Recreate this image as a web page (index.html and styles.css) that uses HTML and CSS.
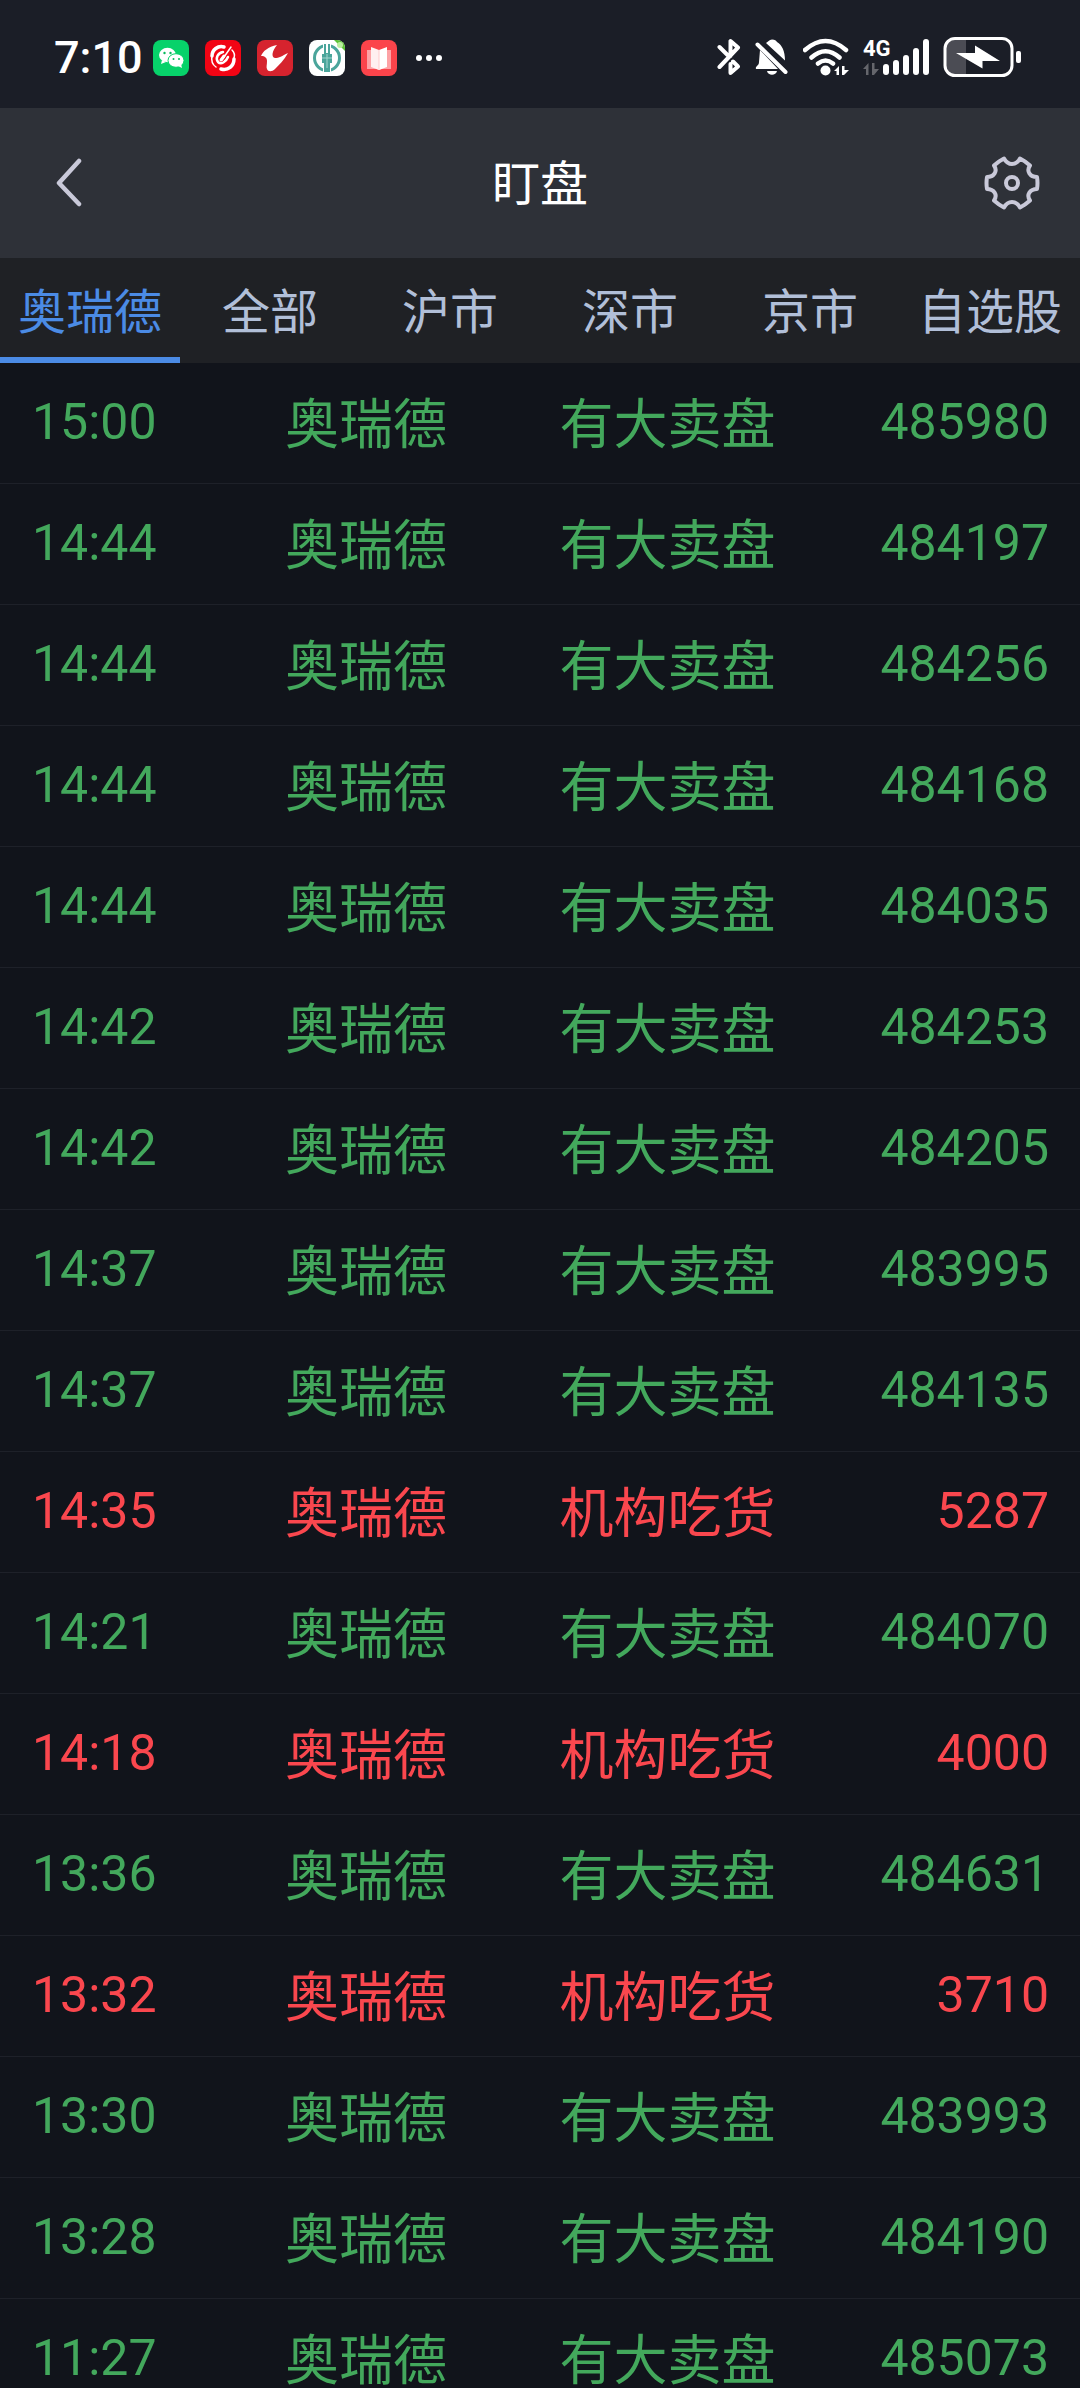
FILE: index.html
```
<!DOCTYPE html>
<html lang="zh-CN">
<head>
    <meta charset="UTF-8">
    <meta name="viewport" content="width=device-width, initial-scale=1.0">
    <title>盯盘</title>
    <link rel="stylesheet" href="styles.css">
</head>
<body>
    <div class="status-bar">
        <span class="clock">7:10</span>
        <div class="app-icons">
            <!-- chat -->
            <svg width="36" height="36" viewBox="0 0 36 36">
                <rect width="36" height="36" rx="8" fill="#07d26a"/>
                <ellipse cx="14.500" cy="15" rx="8.500" ry="7.200" fill="#fff"/>
                <path d="M9 20l-1 4 5-2z" fill="#fff"/>
                <ellipse cx="23" cy="20.500" rx="8" ry="6.800" fill="#fff" stroke="#07d26a"/>
                <path d="M25 26l4 2-1-4z" fill="#fff"/>
                <g fill="#07b95d">
                    <circle cx="11.500" cy="13" r="1.200"/><circle cx="17.500" cy="13" r="1.200"/>
                    <circle cx="20.500" cy="19" r="1"/><circle cx="26" cy="19" r="1"/>
                </g>
            </svg>
            <!-- red swirl -->
            <svg width="36" height="36" viewBox="0 0 36 36">
                <rect width="36" height="36" rx="8" fill="#f20414"/>
                <g fill="none" stroke="#fff" stroke-linecap="round">
                    <path d="M19 7C13 5 7 10 7 16" stroke-width="3.500"/>
                    <path d="M7 16c-1 5 1 9 4 11" stroke-width="1.500"/>
                    <path d="M16 29c7 2 13-3 13-10" stroke-width="3.500"/>
                    <path d="M29 18c1-3 0-6-2-8" stroke-width="1.500"/>
                    <path d="M18 12c-5 1-8 6-5 10 3 3 8 0 10-5" stroke-width="2.500"/>
                    <path d="M26 7L17 20" stroke-width="1.500"/>
                    <path d="M19 16l-3 4" stroke-width="3"/>
                </g>
            </svg>
            <!-- red bird -->
            <svg width="36" height="36" viewBox="0 0 36 36">
                <rect width="36" height="36" rx="8" fill="#d6232e"/>
                <path d="M20 5C11 7 6 11 4 16c4 0 6 2 6 5 0 4-1 6 0 8 1 3 5 3 8 0 4-4 9-9 13-16-6 3-9 5-13 5-4-1-3-7 2-13z" fill="#fff"/>
            </svg>
            <!-- bank -->
            <svg width="36" height="36" viewBox="0 0 36 36">
                <rect width="36" height="36" rx="8" fill="#fff"/>
                <path d="M25 0h3a8 8 0 0 1 8 8v3z" fill="#5bc236"/>
                <circle cx="31" cy="5" r="3" fill="#b9ee9d"/>
                <circle cx="18" cy="18" r="12.500" fill="none" stroke="#4aa59b" stroke-width="3"/>
                <path d="M14 4h8v28h-8z" fill="#fff"/>
                <path d="M15 4h2v9h2V4h2v10h2v9h-2v9h-6v-9h-2v-9h2z" fill="#4aa59b"/>
                <path d="M18 14v14M13 18h10" stroke="#a3d6d0"/>
            </svg>
            <!-- reader -->
            <svg width="36" height="36" viewBox="0 0 36 36">
                <rect width="36" height="36" rx="8" fill="#fb444b"/>
                <path d="M6 10h24v19H20l-2 1-2-1H6z" fill="#fda2a5"/>
                <path d="M10 7l8 3v20l-8-3z" fill="#fff0f0"/>
                <path d="M26 7l-8 3v20l8-3z" fill="#fff"/>
                <path d="M18 10v20" stroke="#fcc"/>
            </svg>
        </div>
        <svg class="more-dots" width="28" height="8" viewBox="0 0 28 8" fill="#fff">
            <circle cx="4" cy="4" r="3"/><circle cx="14" cy="4" r="3"/><circle cx="24" cy="4" r="3"/>
        </svg>
        <div class="system-icons">
            <!-- bluetooth -->
            <svg width="24" height="44" viewBox="0 0 24 44" fill="none" stroke="#fff" stroke-width="4" stroke-linecap="round" stroke-linejoin="round">
                <path d="M2.500 31L21 11.500 13.500 5v15M2.500 11l9 9M13.500 28v9l7.500-6.500-5-5"/>
            </svg>
            <!-- muted bell -->
            <svg width="34" height="44" viewBox="0 0 34 44" fill="#fff">
                <path d="M11 7c2-1 3-3 6-3.500 3 0 4 1 5 2.500 5 3 8 9 8 18.500z"/>
                <path d="M5 14l18 19H1c-1-3 3-3 3-7zM12 35h10c-1 5-9 5-10 0z"/>
                <path d="M2.500 8.500L30.500 36" stroke="#fff" stroke-width="4" stroke-linecap="round"/>
            </svg>
            <!-- wifi -->
            <svg width="46" height="44" viewBox="0 0 46 44" fill="none" stroke="#fff" stroke-width="4.500" stroke-linecap="round">
                <path d="M2 14Q22.500-4 43 14M8.500 21.500Q22.500 9 36.500 21.500M15 27.500q7.500-6 15 0"/>
                <circle cx="22.500" cy="34.500" r="5" fill="#fff" stroke="none"/>
                <path d="M31 35l5-5v9h-2.500v-4zM39 30h2.500v4H46l-5 5h-2z" fill="#fff" stroke="none"/>
            </svg>
            <!-- mobile signal -->
            <svg width="66" height="44" viewBox="0 0 66 44" fill="#fff">
                <text class="network-type" x="0" y="20">4G</text>
                <path d="M0 33l5.500-6v12H3v-6zM9 27h2.500v6H16l-5 6H9z" fill="#65666c"/>
                <rect x="20" y="28" width="6" height="11" rx="3"/>
                <rect x="30" y="24" width="6" height="15" rx="3"/>
                <rect x="40" y="19" width="6" height="20" rx="3"/>
                <rect x="50" y="12" width="6" height="27" rx="3"/>
                <rect x="60" y="3" width="6" height="36" rx="3"/>
            </svg>
            <!-- battery, charging -->
            <svg width="78" height="44" viewBox="0 0 78 44" fill="#fff">
                <path d="M23 3H12a9 9 0 0 0-9 9v18a9 9 0 0 0 9 9h11z" fill="#4b4c54"/>
                <rect x="2" y="2.500" width="67" height="37" rx="10" fill="none" stroke="#fff" stroke-width="3"/>
                <rect x="73" y="15" width="5" height="12" rx="2"/>
                <path d="M13 17h19V9.500L57 25H39.500v7.500z"/>
            </svg>
        </div>
    </div>

    <header class="header">
        <button class="icon-button" aria-label="返回">
            <svg width="28" height="56" viewBox="0 0 28 56" fill="none" stroke="#c9c9d9" stroke-width="4.500" stroke-linecap="round" stroke-linejoin="round">
                <path d="M25 6L5 28 25 49"/>
            </svg>
        </button>
        <h1>盯盘</h1>
        <button class="icon-button" aria-label="设置">
            <svg width="56" height="56" viewBox="0 0 56 56" fill="none" stroke="#c9c9d9" stroke-width="4" stroke-linejoin="round">
                <path d="M20 3.500Q23 9 28 9T36 3.500Q41 6 46 10.500C42 16 46 22 53 22Q54 28 53 34C46 34 42 40 46 45.500Q41 50 36 52.500Q33 47 28 47T20 52.500Q15 50 10 45.500C14 40 10 34 3 34Q2 28 3 22C10 22 14 16 10 10.500Q15 6 20 3.500z"/>
                <circle cx="28" cy="28" r="6"/>
            </svg>
        </button>
    </header>

    <nav class="tabs">
        <button class="tab active">奥瑞德</button>
        <button class="tab">全部</button>
        <button class="tab">沪市</button>
        <button class="tab">深市</button>
        <button class="tab">京市</button>
        <button class="tab">自选股</button>
    </nav>

    <main class="list">
        <table>
            <colgroup>
                <col class="col-time">
                <col class="col-name">
                <col>
                <col class="col-volume">
            </colgroup>
            <tbody id="records"></tbody>
        </table>
    </main>

    <script>
        const records = [
            ['15:00', '有大卖盘', 485980],
            ['14:44', '有大卖盘', 484197],
            ['14:44', '有大卖盘', 484256],
            ['14:44', '有大卖盘', 484168],
            ['14:44', '有大卖盘', 484035],
            ['14:42', '有大卖盘', 484253],
            ['14:42', '有大卖盘', 484205],
            ['14:37', '有大卖盘', 483995],
            ['14:37', '有大卖盘', 484135],
            ['14:35', '机构吃货', 5287],
            ['14:21', '有大卖盘', 484070],
            ['14:18', '机构吃货', 4000],
            ['13:36', '有大卖盘', 484631],
            ['13:32', '机构吃货', 3710],
            ['13:30', '有大卖盘', 483993],
            ['13:28', '有大卖盘', 484190],
            ['11:27', '有大卖盘', 485073]
        ];

        const tbody = document.getElementById('records');
        records.forEach(([time, type, volume]) => {
            const row = tbody.insertRow();
            row.className = type === '机构吃货' ? 'buy' : 'sell';
            [time, '奥瑞德', type, volume].forEach((value, i) => {
                const cell = row.insertCell();
                cell.textContent = value;
                if (i === 0) cell.className = 'number time';
                if (i === 3) cell.className = 'number volume';
            });
        });

        const tabs = document.querySelectorAll('.tab');
        tabs.forEach(tab => {
            tab.onclick = () => {
                tabs.forEach(t => t.classList.remove('active'));
                tab.classList.add('active');
            };
        });
    </script>
</body>
</html>
```
FILE: styles.css
```
* {
    box-sizing: border-box;
}
body {
    display: flex;
    flex-direction: column;
    height: 100vh;
    margin: 0;
    background-color: #11141b;
    color: #fff;
    font-family: "Noto Sans CJK SC", sans-serif;
}
svg {
    display: block;
    flex: none;
}
button {
    padding: 0;
    border: none;
    background: none;
    color: inherit;
    font: inherit;
    cursor: pointer;
}
.status-bar {
    display: flex;
    align-items: center;
    flex: none;
    height: 108px;
    padding: 8px 59px 0 54px;
    background-color: #1b1e27;
}
.clock {
    font: 500 45px/48px Roboto, sans-serif;
}
.app-icons {
    display: flex;
    gap: 16px;
    margin-left: 10px;
}
.more-dots {
    margin-left: 18px;
}
.system-icons {
    display: flex;
    gap: 14px;
    margin-left: auto;
}
.network-type {
    font: 700 22px Roboto, sans-serif;
}
.header {
    display: flex;
    align-items: center;
    justify-content: space-between;
    flex: none;
    height: 150px;
    padding: 0 40px;
    background-color: #2e3138;
}
.header h1 {
    margin: 0;
    padding-bottom: 6px;
    font-size: 48px;
    font-weight: 400;
    line-height: 72px;
}
.icon-button {
    display: flex;
    justify-content: center;
    width: 56px;
}
.tabs {
    display: flex;
    flex: none;
    height: 105px;
    background-color: #1f2125;
}
.tab {
    flex: 1;
    border-bottom: 6px solid transparent;
    color: #b1bfd8;
    font-size: 48px;
    line-height: 72px;
    white-space: nowrap;
}
.tab.active {
    border-bottom-color: #4b8be5;
    color: #4b8be5;
}
.list {
    flex: 1;
    min-height: 0;
    overflow-y: auto;
    scrollbar-width: none;
}
table {
    width: 100%;
    table-layout: fixed;
    border-collapse: separate;
    border-spacing: 0;
}
.col-time {
    width: 26.4%;
}
.col-name {
    width: 25.4%;
}
.col-volume {
    width: 25%;
}
td {
    height: 121px;
    padding: 0 0 4px;
    border-bottom: 1px solid #1e2129;
    font-size: 54px;
    line-height: 80px;
    white-space: nowrap;
}
.number {
    padding-bottom: 2px;
    font-family: Roboto, sans-serif;
    font-size: 50px;
}
.time {
    padding-left: 32px;
}
.volume {
    padding-right: 31px;
    text-align: right;
}
.sell {
    color: #43a85c;
}
.buy {
    color: #fa474e;
}
```
